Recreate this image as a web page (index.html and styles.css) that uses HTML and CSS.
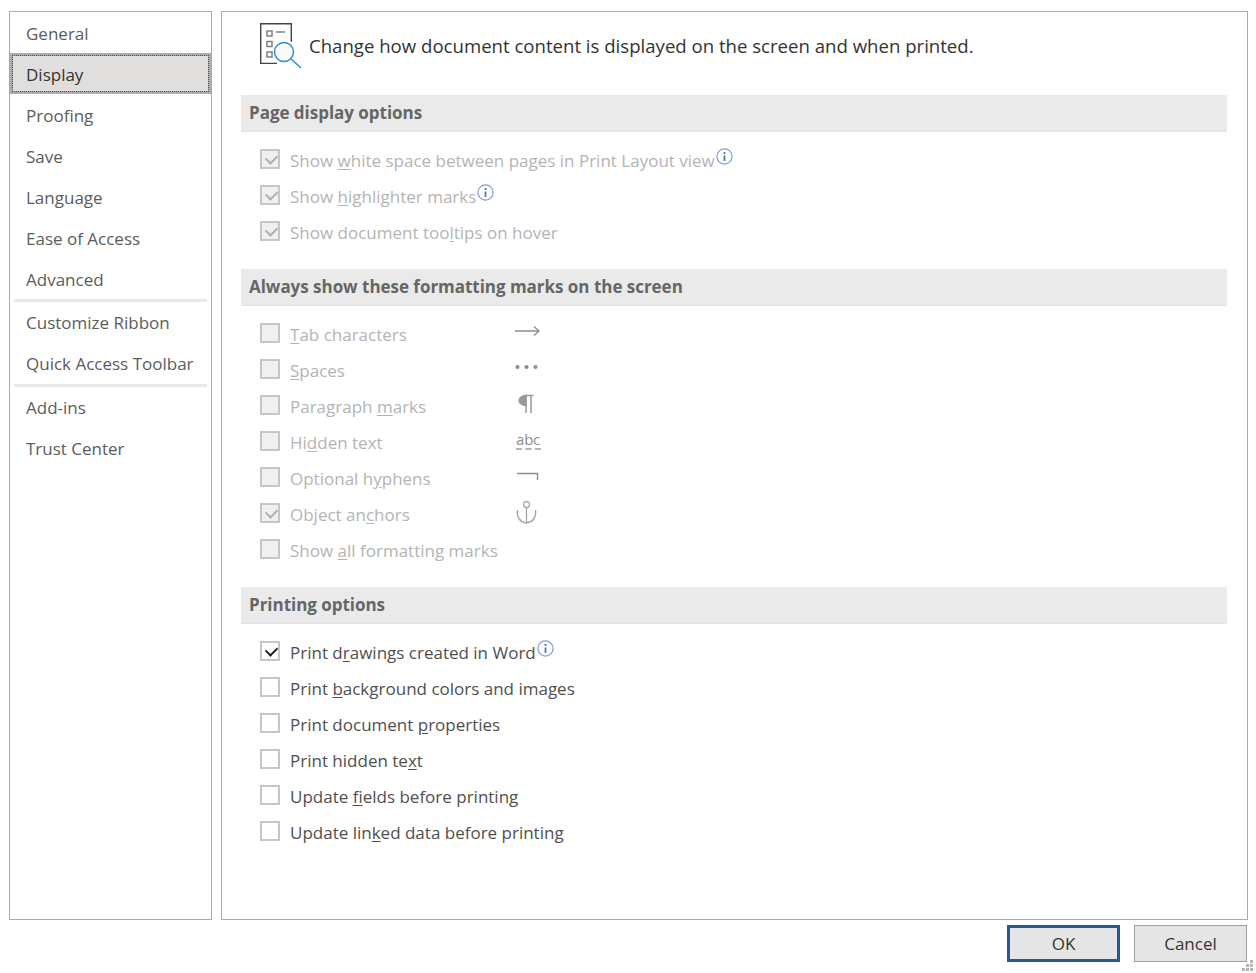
FILE: index.html
```html
<!DOCTYPE html>
<html lang="en">
<head>
    <meta charset="UTF-8">
    <title>Word Options</title>
    <link rel="stylesheet" href="styles.css">
</head>
<body>
    <div class="panes">
        <ul class="nav">
            <li class="navItem">General</li>
            <li class="navItem active"><span class="focusBox">Display</span></li>
            <li class="navItem">Proofing</li>
            <li class="navItem">Save</li>
            <li class="navItem">Language</li>
            <li class="navItem">Ease of Access</li>
            <li class="navItem">Advanced</li>
            <li class="navSep"></li>
            <li class="navItem">Customize Ribbon</li>
            <li class="navItem">Quick Access Toolbar</li>
            <li class="navSep"></li>
            <li class="navItem">Add-ins</li>
            <li class="navItem">Trust Center</li>
        </ul>

        <div class="content">
            <div class="intro">
                <svg class="introIcon" width="42" height="46" viewBox="0 0 42 46">
                    <path d="M17 40.400H.7V.7h30.600v18" fill="none" stroke="#444" stroke-width="1.400"/>
                    <path d="M7 8h5v5H7zM7 18.500h5v5H7zM7 29h5v5H7z" fill="#fff" stroke="#808080" stroke-width="1.500"/>
                    <path d="M16 9h9" stroke="#808080" stroke-width="1.500"/>
                    <circle cx="24" cy="29" r="9.500" fill="#fafafa" stroke="#2b93d6" stroke-width="1.500"/>
                    <path d="M31 36l10 9" stroke="#2b93d6" stroke-width="1.600"/>
                </svg>
                <span>Change how document content is displayed on the screen and when printed.</span>
            </div>

            <h2 class="sectionHead">Page display options</h2>
            <div class="rows">
                <div class="row off"><span class="box checked"></span><span>Show <u>w</u>hite space between pages in Print Layout view</span><svg class="info" viewBox="0 0 17 17"><circle cx="8.5" cy="8.5" r="7.6"/><path d="M8.5 7.5v5.5M8.5 4v2"/></svg></div>
                <div class="row off"><span class="box checked"></span><span>Show <u>h</u>ighlighter marks</span><svg class="info" viewBox="0 0 17 17"><circle cx="8.5" cy="8.5" r="7.6"/><path d="M8.5 7.5v5.5M8.5 4v2"/></svg></div>
                <div class="row off"><span class="box checked"></span><span>Show document too<u>l</u>tips on hover</span></div>
            </div>

            <h2 class="sectionHead">Always show these formatting marks on the screen</h2>
            <div class="rows">
                <div class="row off"><span class="box"></span><span class="markLabel"><u>T</u>ab characters</span>
                    <svg class="mark" width="26" height="26" viewBox="0 0 26 26"><path d="M0 10h23M19 5.500l5 4.500-5 4.500" fill="none" stroke="#8e8e8e" stroke-width="1.300"/></svg></div>
                <div class="row off"><span class="box"></span><span class="markLabel"><u>S</u>paces</span>
                    <svg class="mark" width="26" height="26" viewBox="0 0 26 26"><circle cx="2.500" cy="10" r="2.100" fill="#8e8e8e"/><circle cx="11.500" cy="10" r="2.100" fill="#8e8e8e"/><circle cx="20.500" cy="10" r="2.100" fill="#8e8e8e"/></svg></div>
                <div class="row off"><span class="box"></span><span class="markLabel">Paragraph <u>m</u>arks</span>
                    <svg class="mark" width="26" height="26" viewBox="0 0 26 26"><path d="M11 2.500a7 5 0 0 0 0 10z" fill="#999" stroke="#999" stroke-width="1.300"/><path d="M11 2.500h7.500M11 2.500v17.500M16 2.500v17.500" fill="none" stroke="#999" stroke-width="1.500"/></svg></div>
                <div class="row off"><span class="box"></span><span class="markLabel">Hi<u>d</u>den text</span>
                    <span class="mark abc">abc</span></div>
                <div class="row off"><span class="box"></span><span class="markLabel">Optional h<u>y</u>phens</span>
                    <svg class="mark" width="26" height="26" viewBox="0 0 26 26"><path d="M2 8.500h20.500v6.500" fill="none" stroke="#8e8e8e" stroke-width="1.400"/></svg></div>
                <div class="row off"><span class="box checked"></span><span class="markLabel">Object an<u>c</u>hors</span>
                    <svg class="mark" width="26" height="26" viewBox="0 0 26 26"><circle cx="11.500" cy="3.500" r="3" fill="none" stroke="#a6a6a6" stroke-width="1.300"/><path d="M11.500 7v14.500M2.500 9c-1 8 3 12 9 13 6-1 10-5 9-13" fill="none" stroke="#a6a6a6" stroke-width="1.300"/></svg></div>
                <div class="row off"><span class="box"></span><span>Show <u>a</u>ll formatting marks</span></div>
            </div>

            <h2 class="sectionHead">Printing options</h2>
            <div class="rows">
                <div class="row"><span class="box checked"></span><span>Print d<u>r</u>awings created in Word</span><svg class="info" viewBox="0 0 17 17"><circle cx="8.5" cy="8.5" r="7.6"/><path d="M8.5 7.5v5.5M8.5 4v2"/></svg></div>
                <div class="row"><span class="box"></span><span>Print <u>b</u>ackground colors and images</span></div>
                <div class="row"><span class="box"></span><span>Print document <u>p</u>roperties</span></div>
                <div class="row"><span class="box"></span><span>Print hidden te<u>x</u>t</span></div>
                <div class="row"><span class="box"></span><span>Update <u>f</u>ields before printing</span></div>
                <div class="row"><span class="box"></span><span>Update lin<u>k</u>ed data before printing</span></div>
            </div>
        </div>
    </div>

    <div class="footer">
        <button type="button" class="btn primary">OK</button>
        <button type="button" class="btn">Cancel</button>
    </div>
    <svg class="grip" width="12" height="12" viewBox="0 0 12 12"><path d="M8 0h3v3H8zM4 4h3v3H4zM8 4h3v3H8zM0 8h3v3H0zM4 8h3v3H4zM8 8h3v3H8z" fill="#b5b5b5"/></svg>
</body>
</html>
```
FILE: styles.css
```css
* {
    box-sizing: border-box;
}

html, body {
    height: 973px;
    overflow: hidden;
}

body {
    position: relative;
    margin: 0;
    padding: 11px 8px 0 9px;
    background-color: #fff;
    color: #444;
    font-family: 'Open Sans', 'Noto Sans', sans-serif;
    font-size: 17px;
}

.panes {
    display: flex;
    gap: 9px;
    height: 909px;
}

.nav {
    width: 203px;
    margin: 0;
    padding: 0;
    list-style: none;
    border: 1px solid #ababab;
}

.navItem {
    height: 41px;
    padding-left: 16px;
    line-height: 43px;
    color: #5c5c5c;
}

.navSep + .navItem,
.navSep + .navItem + .navItem {
    line-height: 41px;
}

.navItem.active {
    padding: 0;
    background-color: #ababab;
    color: #333;
}

.focusBox {
    display: block;
    height: 41px;
    padding-left: 13px;
    line-height: 37px;
    background-color: #e0dfde;
    border: 3px solid #ababab;
    outline: 1px dotted #555;
    outline-offset: -3px;
}

.navSep {
    height: 3px;
    margin: 0 4px;
    background-color: #e8e8e8;
}

.content {
    flex: 1;
    padding: 0 20px 0 19px;
    border: 1px solid #ababab;
}

.intro {
    display: flex;
    align-items: center;
    height: 83px;
    padding-left: 19px;
    padding-bottom: 16px;
    gap: 7px;
    color: #333;
    font-size: 18.6px;
}

.introIcon {
    flex: none;
    margin-top: 1px;
}

.sectionHead {
    height: 37px;
    margin: 0;
    padding-left: 8px;
    line-height: 35px;
    background-color: #eaeaea;
    border-bottom: 1px solid #e2e2e2;
    color: #666;
    font-size: 17px;
    font-weight: 700;
    letter-spacing: -0.03px;
}

.rows {
    padding: 10px 0 19px 19px;
}

.row {
    display: flex;
    align-items: center;
    height: 36px;
    color: #4f4f4f;
}

.row.off {
    color: #b4b4b4;
}

.row u {
    text-underline-offset: 2px;
}

.box {
    position: relative;
    flex: none;
    width: 20px;
    height: 20px;
    margin-right: 10px;
    border: 2px solid #c6c6c6;
    background-color: #fff;
    top: -1px;
}

.row.off .box {
    background-color: #f0f0f0;
}

.box.checked::after {
    content: "";
    position: absolute;
    left: 4px;
    top: 3px;
    width: 9px;
    height: 6px;
    border-left: 2px solid #262626;
    border-bottom: 2px solid #262626;
    transform: rotate(-45deg);
}

.row.off .box.checked::after {
    border-color: #b0b0b0;
}

.info {
    position: relative;
    top: -4px;
    flex: none;
    width: 17px;
    height: 17px;
    margin-left: 1px;
    fill: #fff;
    stroke: #7f9fd4;
    stroke-width: 1.2;
}

.info path {
    stroke: #4a74b8;
    stroke-width: 1.8;
}

.markLabel {
    width: 225px;
}

.mark {
    flex: none;
    position: relative;
}

.abc {
    top: -2px;
    width: 25px;
    margin-left: 1px;
    color: #8e8e8e;
    font-size: 15px;
    line-height: 17px;
    letter-spacing: -0.2px;
    border-bottom: 2px dashed #b5b5b5;
}

.footer {
    display: flex;
    justify-content: flex-end;
    gap: 14px;
    padding: 5px 1px 0 0;
}

.btn {
    width: 113px;
    height: 37px;
    padding: 0;
    background-color: #e5e5e5;
    border: 1px solid #a0a0a0;
    color: #333;
    font: inherit;
}

.btn.primary {
    border: 3px solid #2a5597;
}

.grip {
    position: absolute;
    right: 2px;
    bottom: 1px;
}
```
